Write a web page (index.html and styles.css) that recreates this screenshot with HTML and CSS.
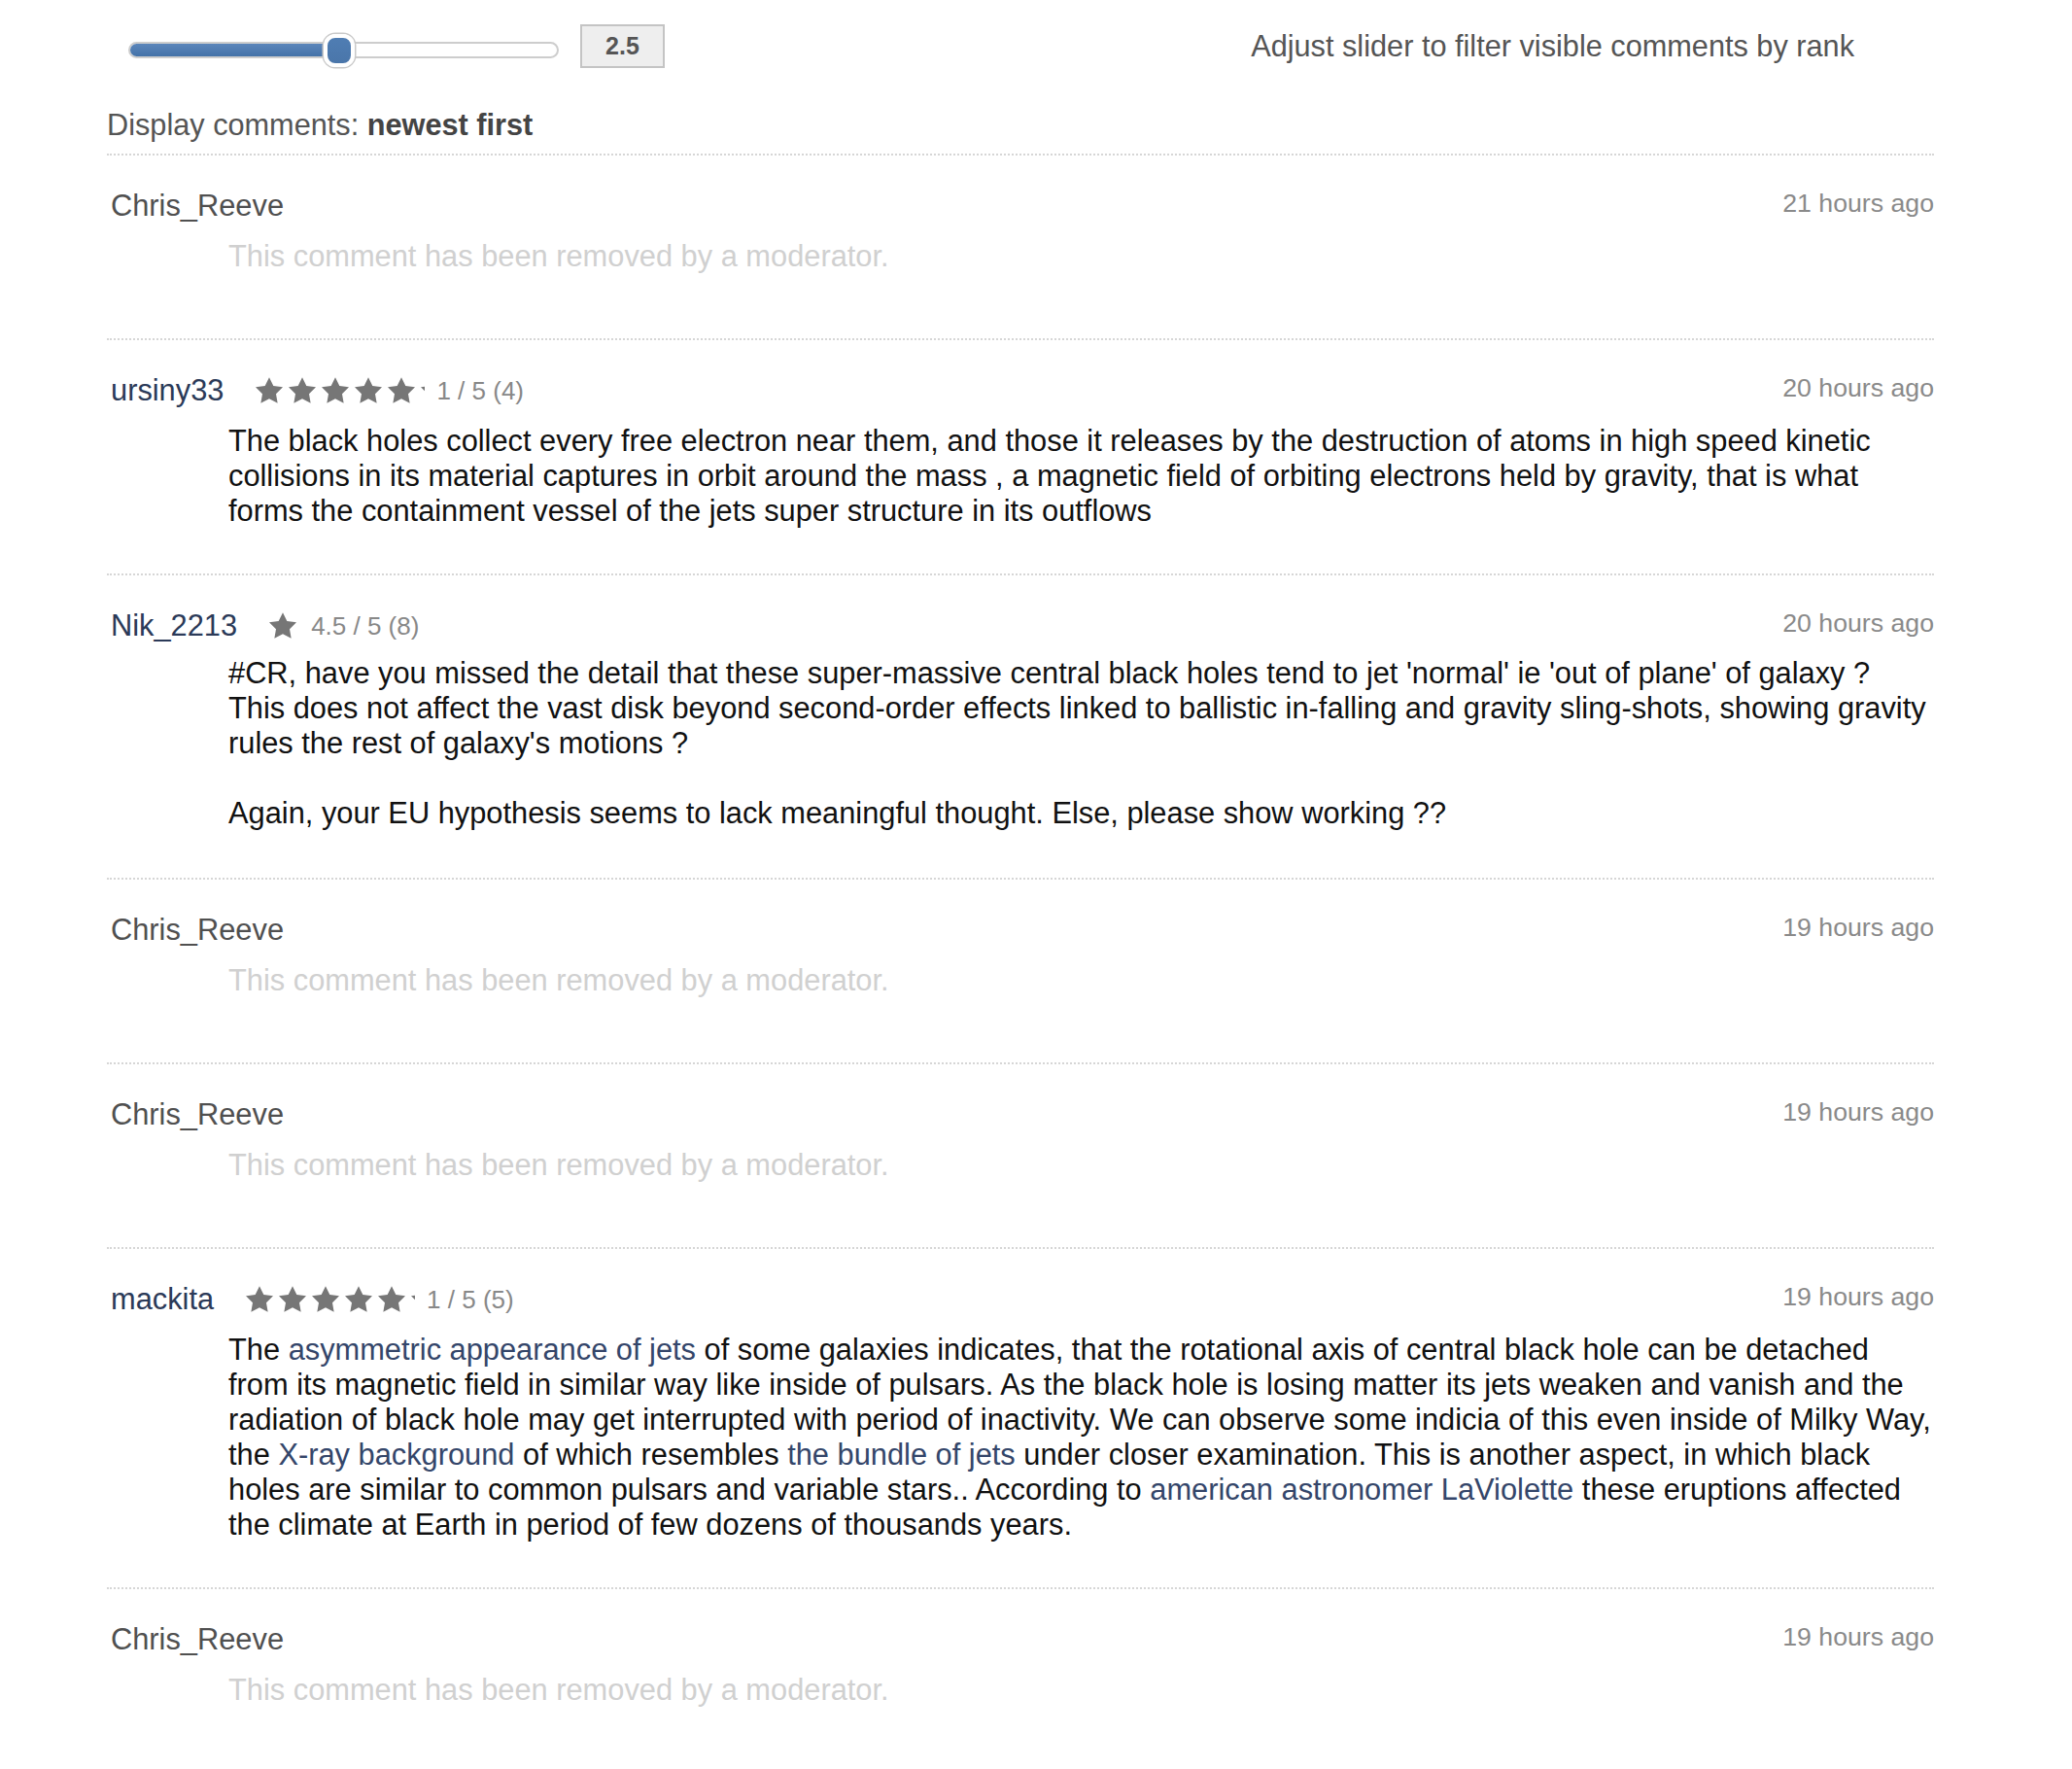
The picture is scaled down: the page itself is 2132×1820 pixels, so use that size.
FILE: index.html
```html
<!DOCTYPE html>
<html lang="en">
<head>
<meta charset="utf-8">
<title>Comments</title>
<link rel="stylesheet" href="styles.css">
</head>
<body>
<div class="page">
  <div class="toolbar">
    <div class="slider">
      <div class="track">
        <div class="fill" style="width:49%"></div>
        <div class="thumb" style="left:49%"></div>
      </div>
    </div>
    <div class="value">2.5</div>
    <div class="hint">Adjust slider to filter visible comments by rank</div>
  </div>

  <div class="sort">Display comments: <b>newest first</b></div>

  <div class="comments">
    <article class="comment removed">
      <header class="c-head">
        <span class="author plain">Chris_Reeve</span>
        <span class="time">21 hours ago</span>
      </header>
      <div class="c-body">This comment has been removed by a moderator.</div>
    </article>

    <article class="comment">
      <header class="c-head">
        <a class="author">ursiny33</a>
        <span class="rating">
          <span class="stars">
            <svg class="star" viewBox="2 2 20 19.02"><path d="M12 2l3.09 6.26L22 9.27l-5 4.87 1.18 6.88L12 17.77l-6.18 3.25L7 14.14 2 9.27l6.91-1.01L12 2z"/></svg>
            <svg class="star" viewBox="2 2 20 19.02"><path d="M12 2l3.09 6.26L22 9.27l-5 4.87 1.18 6.88L12 17.77l-6.18 3.25L7 14.14 2 9.27l6.91-1.01L12 2z"/></svg>
            <svg class="star" viewBox="2 2 20 19.02"><path d="M12 2l3.09 6.26L22 9.27l-5 4.87 1.18 6.88L12 17.77l-6.18 3.25L7 14.14 2 9.27l6.91-1.01L12 2z"/></svg>
            <svg class="star" viewBox="2 2 20 19.02"><path d="M12 2l3.09 6.26L22 9.27l-5 4.87 1.18 6.88L12 17.77l-6.18 3.25L7 14.14 2 9.27l6.91-1.01L12 2z"/></svg>
            <svg class="star" viewBox="2 2 20 19.02"><path d="M12 2l3.09 6.26L22 9.27l-5 4.87 1.18 6.88L12 17.77l-6.18 3.25L7 14.14 2 9.27l6.91-1.01L12 2z"/></svg>
            <span class="sliver"><svg class="star" viewBox="2 2 20 19.02"><path d="M12 2l3.09 6.26L22 9.27l-5 4.87 1.18 6.88L12 17.77l-6.18 3.25L7 14.14 2 9.27l6.91-1.01L12 2z"/></svg></span>
          </span>
          <span class="score">1 / 5 (4)</span>
        </span>
        <span class="time">20 hours ago</span>
      </header>
      <div class="c-body">
        <p>The black holes collect every free electron near them, and those it releases by the destruction of atoms in high speed kinetic<br>collisions in its material captures in orbit around the mass , a magnetic field of orbiting electrons held by gravity, that is what<br>forms the containment vessel of the jets super structure in its outflows</p>
      </div>
    </article>

    <article class="comment multi">
      <header class="c-head">
        <a class="author">Nik_2213</a>
        <span class="rating single">
          <span class="stars">
            <svg class="star" viewBox="2 2 20 19.02"><path d="M12 2l3.09 6.26L22 9.27l-5 4.87 1.18 6.88L12 17.77l-6.18 3.25L7 14.14 2 9.27l6.91-1.01L12 2z"/></svg>
          </span>
          <span class="score">4.5 / 5 (8)</span>
        </span>
        <span class="time">20 hours ago</span>
      </header>
      <div class="c-body">
        <p>#CR, have you missed the detail that these super-massive central black holes tend to jet 'normal' ie 'out of plane' of galaxy ?<br>This does not affect the vast disk beyond second-order effects linked to ballistic in-falling and gravity sling-shots, showing gravity<br>rules the rest of galaxy's motions ?</p>
        <p>Again, your EU hypothesis seems to lack meaningful thought. Else, please show working ??</p>
      </div>
    </article>

    <article class="comment removed">
      <header class="c-head">
        <span class="author plain">Chris_Reeve</span>
        <span class="time">19 hours ago</span>
      </header>
      <div class="c-body">This comment has been removed by a moderator.</div>
    </article>

    <article class="comment removed">
      <header class="c-head">
        <span class="author plain">Chris_Reeve</span>
        <span class="time">19 hours ago</span>
      </header>
      <div class="c-body">This comment has been removed by a moderator.</div>
    </article>

    <article class="comment">
      <header class="c-head">
        <a class="author">mackita</a>
        <span class="rating">
          <span class="stars">
            <svg class="star" viewBox="2 2 20 19.02"><path d="M12 2l3.09 6.26L22 9.27l-5 4.87 1.18 6.88L12 17.77l-6.18 3.25L7 14.14 2 9.27l6.91-1.01L12 2z"/></svg>
            <svg class="star" viewBox="2 2 20 19.02"><path d="M12 2l3.09 6.26L22 9.27l-5 4.87 1.18 6.88L12 17.77l-6.18 3.25L7 14.14 2 9.27l6.91-1.01L12 2z"/></svg>
            <svg class="star" viewBox="2 2 20 19.02"><path d="M12 2l3.09 6.26L22 9.27l-5 4.87 1.18 6.88L12 17.77l-6.18 3.25L7 14.14 2 9.27l6.91-1.01L12 2z"/></svg>
            <svg class="star" viewBox="2 2 20 19.02"><path d="M12 2l3.09 6.26L22 9.27l-5 4.87 1.18 6.88L12 17.77l-6.18 3.25L7 14.14 2 9.27l6.91-1.01L12 2z"/></svg>
            <svg class="star" viewBox="2 2 20 19.02"><path d="M12 2l3.09 6.26L22 9.27l-5 4.87 1.18 6.88L12 17.77l-6.18 3.25L7 14.14 2 9.27l6.91-1.01L12 2z"/></svg>
            <span class="sliver"><svg class="star" viewBox="2 2 20 19.02"><path d="M12 2l3.09 6.26L22 9.27l-5 4.87 1.18 6.88L12 17.77l-6.18 3.25L7 14.14 2 9.27l6.91-1.01L12 2z"/></svg></span>
          </span>
          <span class="score">1 / 5 (5)</span>
        </span>
        <span class="time">19 hours ago</span>
      </header>
      <div class="c-body">
        <p>The <a>asymmetric appearance of jets</a> of some galaxies indicates, that the rotational axis of central black hole can be detached<br>from its magnetic field in similar way like inside of pulsars. As the black hole is losing matter its jets weaken and vanish and the<br>radiation of black hole may get interrupted with period of inactivity. We can observe some indicia of this even inside of Milky Way,<br>the <a>X-ray background</a> of which resembles <a>the bundle of jets</a> under closer examination. This is another aspect, in which black<br>holes are similar to common pulsars and variable stars.. According to <a>american astronomer LaViolette</a> these eruptions affected<br>the climate at Earth in period of few dozens of thousands years.</p>
      </div>
    </article>

    <article class="comment removed">
      <header class="c-head">
        <span class="author plain">Chris_Reeve</span>
        <span class="time">19 hours ago</span>
      </header>
      <div class="c-body">This comment has been removed by a moderator.</div>
    </article>
  </div>
</div>
</body>
</html>
```

FILE: styles.css
```css
* { box-sizing: border-box; }

html, body {
  margin: 0;
  padding: 0;
  background: #ffffff;
}

body {
  font-family: "Liberation Sans", Arial, Helvetica, sans-serif;
  color: #111;
}

.page {
  width: 1990px;
  padding-left: 110px;
}

/* ---------- toolbar ---------- */
.toolbar {
  display: flex;
  align-items: center;
  height: 45px;
  margin-top: 25px;
}

.slider {
  align-self: flex-start;
  margin-top: 18px;
  margin-left: 22px;
  width: 443px;
}

.track {
  position: relative;
  height: 17px;
  border: 2px solid #cdcdcd;
  border-radius: 9px;
  background: #fff;
}

.fill {
  height: 100%;
  border-radius: 7px 0 0 7px;
  background: linear-gradient(#5b86bb, #4472a8);
}

.thumb {
  position: absolute;
  top: 50%;
  width: 32px;
  height: 34px;
  margin-left: -16px;
  margin-top: -17px;
  border: 4px solid #fff;
  border-radius: 12px;
  background: linear-gradient(#4f7db3, #4a76aa);
  box-shadow: 0 0 0 1.5px #c9c9c9;
}

.value {
  margin-left: 22px;
  width: 87px;
  height: 45px;
  border: 2px solid #c4c4c4;
  background: #eeeeee;
  display: flex;
  align-items: center;
  justify-content: center;
  font-weight: bold;
  font-size: 25px;
  color: #555;
}

.hint {
  margin-left: auto;
  margin-right: 82px;
  font-size: 30.7px;
  line-height: 36px;
  color: #555;
}

/* ---------- sort ---------- */
.sort {
  margin-top: 41px;
  margin-bottom: 11px;
  font-size: 30.7px;
  line-height: 36px;
  color: #555;
}

.sort b {
  color: #444;
}

/* ---------- comments ---------- */
.comment {
  border-top: 2px dotted #d6d6d6;
  padding: 34px 0 46px 4px;
}

.comment.removed {
  padding-bottom: 66px;
}

.comment.multi {
  padding-bottom: 48px;
}

.c-head {
  display: flex;
  align-items: center;
  height: 36px;
}

.author {
  font-size: 30.8px;
  line-height: 36px;
  color: #2b3a58;
  text-decoration: none;
}

.author.plain {
  color: #505050;
}

.rating {
  display: flex;
  align-items: center;
  margin-left: 33px;
}

.stars {
  display: flex;
  align-items: center;
  gap: 6px;
  margin-top: -2px;
}

.star {
  display: block;
  width: 28px;
  height: 27px;
  fill: #767676;
}

.sliver {
  display: block;
  width: 4px;
  overflow: hidden;
}

.score {
  margin-left: 12px;
  font-size: 26px;
  color: #888;
}

.rating.single .score {
  margin-left: 15px;
}

.time {
  margin-left: auto;
  align-self: flex-start;
  font-size: 26.7px;
  line-height: 31px;
  color: #8a8a8a;
}

.c-body {
  margin: 16px 0 0 121px;
  font-size: 30.8px;
  line-height: 36px;
  color: #111;
  white-space: nowrap;
}

.comment.multi .c-body {
  margin-top: 13px;
}

.c-body p {
  margin: 0;
}

.c-body p + p {
  margin-top: 36px;
}

.c-body a {
  color: #34466a;
  text-decoration: none;
}

.removed .c-body {
  color: #d0d0d0;
}
```
